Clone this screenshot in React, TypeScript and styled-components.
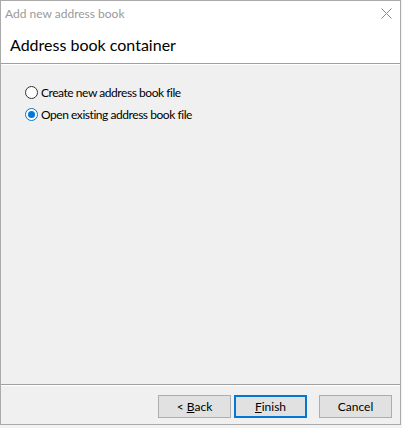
import React from "react";
import styled, { createGlobalStyle, css } from "styled-components";

const Global = createGlobalStyle`
  html, body { margin: 0; padding: 0; background: #f3f3f3; }
  body { font-family: "Lato", "Noto Sans", sans-serif; }
  * { box-sizing: border-box; }
`;

const Window = styled.div`
  width: 401px;
  height: 425px;
  border: 1px solid #aaaaaa;
  background: #f0f0f0;
  display: flex;
  flex-direction: column;
`;

const TitleBar = styled.div`
  height: 25px;
  background: #ffffff;
  display: flex;
  align-items: center;
  justify-content: space-between;
  padding: 0 8px 0 4px;
`;

const Title = styled.span`
  font-size: 12px;
  color: #9a9a9a;
`;

const Close = styled.svg`
  width: 11px;
  height: 11px;
`;

const Header = styled.div`
  height: 37px;
  background: #ffffff;
  display: flex;
  align-items: center;
  padding-left: 9px;
  font-size: 16px;
  color: #000000;
`;

const Separator = styled.div`
  height: 2px;
  border-top: 1px solid #a0a0a0;
  border-bottom: 1px solid #ffffff;
`;

const Body = styled.div`
  flex: 1;
  padding: 16px 0 0 24px;
  display: flex;
  flex-direction: column;
`;

const RadioRow = styled.label`
  height: 22px;
  display: flex;
  align-items: center;
  gap: 3px;
  font-size: 12px;
  letter-spacing: -0.45px;
  color: #000000;
`;

const RadioCircle = styled.span<{ $checked?: boolean }>`
  width: 13px;
  height: 13px;
  border-radius: 50%;
  background: #ffffff;
  border: 1px solid #333333;
  display: flex;
  align-items: center;
  justify-content: center;
  ${(p) =>
    p.$checked &&
    css`
      border-color: #0078d7;
      &::after {
        content: "";
        width: 7px;
        height: 7px;
        border-radius: 50%;
        background: #0078d7;
      }
    `}
`;

const Footer = styled.div`
  height: 38px;
  display: flex;
  justify-content: flex-end;
  align-items: flex-start;
  padding: 9px 8px 0 0;
`;

const Button = styled.button<{ $default?: boolean; $gap?: number }>`
  width: 73px;
  height: 23px;
  margin-left: ${(p) => p.$gap ?? 0}px;
  background: #e1e1e1;
  border: 1px solid #adadad;
  font-family: inherit;
  font-size: 12px;
  color: #000000;
  padding: 0;
  display: flex;
  align-items: center;
  justify-content: center;
  ${(p) =>
    p.$default &&
    css`
      border: 2px solid #0078d7;
    `}
`;

const U = styled.span`
  text-decoration: underline;
`;

export default function App() {
  return (
    <>
      <Global />
      <Window>
        <TitleBar>
          <Title>Add new address book</Title>
          <Close viewBox="0 0 11 11">
            <path d="M0.5 0.5 L10.5 10.5 M10.5 0.5 L0.5 10.5" stroke="#8c8c8c" strokeWidth="1" fill="none" />
          </Close>
        </TitleBar>
        <Header>Address book container</Header>
        <Separator />
        <Body>
          <RadioRow>
            <RadioCircle />
            Create new address book file
          </RadioRow>
          <RadioRow>
            <RadioCircle $checked />
            Open existing address book file
          </RadioRow>
        </Body>
        <Separator />
        <Footer>
          <Button>
            &lt;&nbsp;<U>B</U>ack
          </Button>
          <Button $default $gap={3}>
            <U>F</U>inish
          </Button>
          <Button $gap={12}>Cancel</Button>
        </Footer>
      </Window>
    </>
  );
}
